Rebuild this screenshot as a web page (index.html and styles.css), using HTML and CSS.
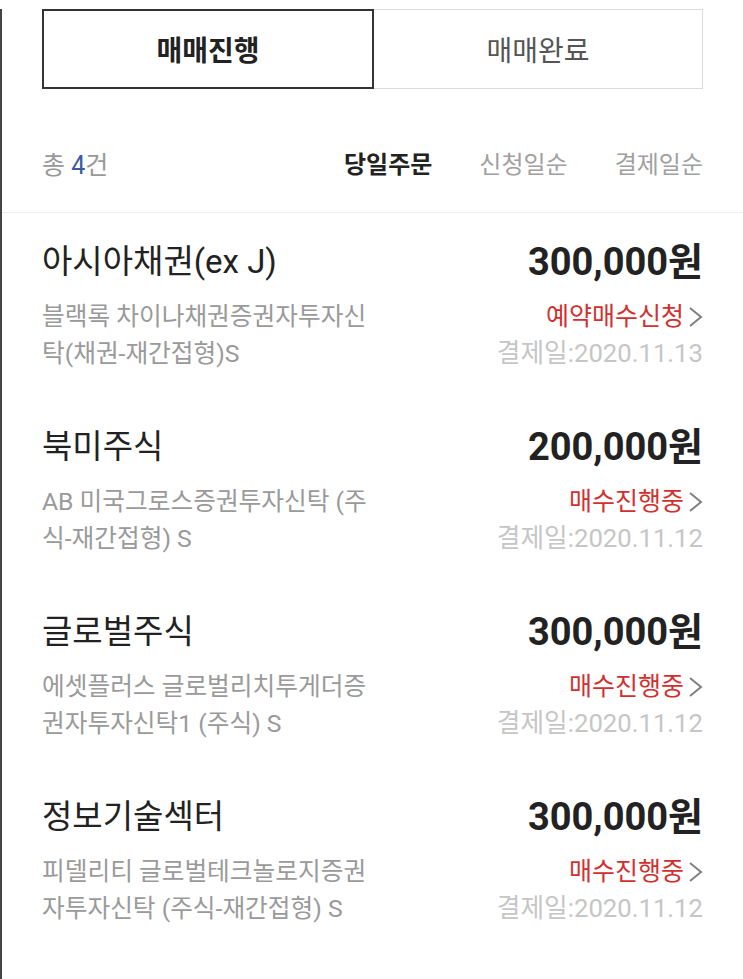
FILE: index.html
```html
<!DOCTYPE html>
<html lang="ko">
<head>
<meta charset="UTF-8">
<meta name="viewport" content="width=device-width, initial-scale=1.0">
<title>매매내역</title>
<link rel="stylesheet" href="styles.css">
</head>
<body>

<div class="page">
    <div class="tabs">
        <button class="tab active">매매진행</button>
        <button class="tab">매매완료</button>
    </div>

    <div class="sort-bar">
        <span class="total">총 <em>4</em>건</span>
        <div class="sort-menu">
            <a class="sort on">당일주문</a>
            <a class="sort">신청일순</a>
            <a class="sort">결제일순</a>
        </div>
    </div>

    <ul class="orders">
        <li class="order">
            <div class="fund">
                <div class="fund-name">아시아채권(ex J)</div>
                <div class="fund-desc">블랙록 차이나채권증권자투자신탁(채권-재간접형)S</div>
            </div>
            <div class="info">
                <div class="amount">300,000원</div>
                <a class="status">예약매수신청<svg class="chev" width="15" height="22" viewBox="0 0 15 22"><polyline points="2,2 13,11 2,20" fill="none" stroke="#808080" stroke-width="2"/></svg></a>
                <div class="date">결제일:2020.11.13</div>
            </div>
        </li>
        <li class="order">
            <div class="fund">
                <div class="fund-name">북미주식</div>
                <div class="fund-desc">AB 미국그로스증권투자신탁 (주식-재간접형) S</div>
            </div>
            <div class="info">
                <div class="amount">200,000원</div>
                <a class="status">매수진행중<svg class="chev" width="15" height="22" viewBox="0 0 15 22"><polyline points="2,2 13,11 2,20" fill="none" stroke="#808080" stroke-width="2"/></svg></a>
                <div class="date">결제일:2020.11.12</div>
            </div>
        </li>
        <li class="order">
            <div class="fund">
                <div class="fund-name">글로벌주식</div>
                <div class="fund-desc">에셋플러스 글로벌리치투게더증권자투자신탁1 (주식) S</div>
            </div>
            <div class="info">
                <div class="amount">300,000원</div>
                <a class="status">매수진행중<svg class="chev" width="15" height="22" viewBox="0 0 15 22"><polyline points="2,2 13,11 2,20" fill="none" stroke="#808080" stroke-width="2"/></svg></a>
                <div class="date">결제일:2020.11.12</div>
            </div>
        </li>
        <li class="order">
            <div class="fund">
                <div class="fund-name">정보기술섹터</div>
                <div class="fund-desc">피델리티 글로벌테크놀로지증권자투자신탁 (주식-재간접형) S</div>
            </div>
            <div class="info">
                <div class="amount">300,000원</div>
                <a class="status">매수진행중<svg class="chev" width="15" height="22" viewBox="0 0 15 22"><polyline points="2,2 13,11 2,20" fill="none" stroke="#808080" stroke-width="2"/></svg></a>
                <div class="date">결제일:2020.11.12</div>
            </div>
        </li>
    </ul>
</div>

</body>
</html>
```

FILE: styles.css
```css
body {
    margin: 0;
    padding: 0;
    font-family: Roboto, "Noto Sans CJK KR", sans-serif;
    background-color: #fff;
    color: #222;
}
.page {
    min-height: 979px;
    border-left: 2px solid #444;
    box-sizing: border-box;
}
.tabs {
    display: flex;
    margin: 9px 40px 0 40px;
    height: 80px;
}
.tab {
    flex: 1;
    border: 1px solid #dcdcdc;
    border-left: none;
    background-color: #fff;
    font-family: inherit;
    font-size: 28px;
    color: #555;
    padding: 0;
}
.tab.active {
    border: 2px solid #333;
    color: #222;
    font-weight: bold;
}
.sort-bar {
    display: flex;
    justify-content: space-between;
    align-items: center;
    height: 124px;
    padding: 24px 40px 0 40px;
    box-sizing: border-box;
    border-bottom: 1px solid #eee;
}
.total {
    font-size: 25px;
    color: #999;
}
.total em {
    font-style: normal;
    color: #3b5ba5;
}
.sort-menu {
    display: flex;
    gap: 47px;
}
.sort {
    font-size: 24px;
    color: #a0a0a0;
}
.sort.on {
    color: #222;
    font-weight: bold;
}
.orders {
    list-style: none;
    margin: 0;
    padding: 0 40px;
}
.order {
    display: flex;
    justify-content: space-between;
    padding: 27px 0 26px 0;
}
.fund {
    width: 340px;
}
.fund-name {
    font-size: 33px;
    line-height: 44px;
    color: #222;
}
.fund-desc {
    margin-top: 14px;
    font-size: 24.7px;
    line-height: 37px;
    color: #9a9a9a;
}
.info {
    display: flex;
    flex-direction: column;
    align-items: flex-end;
}
.amount {
    font-size: 38px;
    line-height: 44px;
    font-weight: bold;
    color: #222;
}
.status {
    display: flex;
    align-items: center;
    margin-top: 14px;
    font-size: 25px;
    line-height: 37px;
    color: #d2302f;
}
.chev {
    margin-left: 4px;
}
.date {
    font-size: 25.7px;
    line-height: 37px;
    color: #c6c6c6;
}
```
